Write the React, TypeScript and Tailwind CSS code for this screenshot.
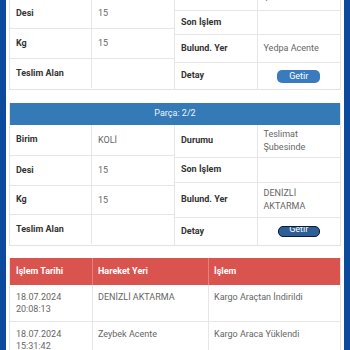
import React from "react";

type Row = { label: string; value?: string[]; h: string; button?: "normal" | "focused" };

const part1Left: Row[] = [
  { label: "Birim", value: ["KOLİ"], h: "h-[30px]" },
  { label: "Desi", value: ["15"], h: "h-[30px]" },
  { label: "Kg", value: ["15"], h: "h-[30px]" },
  { label: "Teslim Alan", h: "h-[29px]" },
];

const part1Right: Row[] = [
  { label: "Durumu", value: ["Teslimat", "Şubesinde"], h: "h-[42px]" },
  { label: "Son İşlem", h: "h-[24px]" },
  { label: "Bulund. Yer", value: ["Yedpa Acente"], h: "h-[28px]" },
  { label: "Detay", h: "h-[26px]", button: "normal" },
];

const part2Left: Row[] = [
  { label: "Birim", value: ["KOLİ"], h: "h-[31px]" },
  { label: "Desi", value: ["15"], h: "h-[30px]" },
  { label: "Kg", value: ["15"], h: "h-[29px]" },
  { label: "Teslim Alan", h: "h-[29px]" },
];

const part2Right: Row[] = [
  { label: "Durumu", value: ["Teslimat", "Şubesinde"], h: "h-[33px]" },
  { label: "Son İşlem", h: "h-[25px]" },
  { label: "Bulund. Yer", value: ["DENİZLİ", "AKTARMA"], h: "h-[35px]" },
  { label: "Detay", h: "h-[27px]", button: "focused" },
];

const movements = [
  { date: "18.07.2024", time: "20:08:13", place: "DENİZLİ AKTARMA", action: "Kargo Araçtan İndirildi" },
  { date: "18.07.2024", time: "15:31:42", place: "Zeybek Acente", action: "Kargo Araca Yüklendi" },
];

function GetirButton({ focused }: { focused?: boolean }) {
  if (focused) {
    return (
      <div className="w-[42px] h-[11px] rounded-[5px] bg-[#2d5e95] border-[1.5px] border-[#0e1a2e] overflow-hidden flex justify-center">
        <span className="text-white text-[9px] leading-[9px] -mt-[2px]">Getir</span>
      </div>
    );
  }
  return (
    <div className="w-[43px] h-[13px] rounded-[5px] bg-[#3a7bbf] flex items-center justify-center">
      <span className="text-white text-[9px] leading-none">Getir</span>
    </div>
  );
}

function InfoTable({ rows, last }: { rows: Row[]; last?: boolean }) {
  return (
    <div className={`w-1/2 flex flex-col ${last ? "" : "border-r border-[#e6e6e6]"}`}>
      {rows.map((r, i) => (
        <div
          key={r.label}
          className={`flex shrink-0 ${r.h} ${i < rows.length - 1 ? "border-b border-[#e6e6e6]" : ""}`}
        >
          <div className="w-1/2 border-r border-[#e6e6e6] px-[6px] flex items-center font-bold text-[#333]">
            {r.label}
          </div>
          <div className="w-1/2 px-[6px] flex flex-col justify-center text-[#666] leading-[13px]">
            {r.value?.map((v) => <span key={v}>{v}</span>)}
            {r.button && (
              <div className="flex justify-center">
                <GetirButton focused={r.button === "focused"} />
              </div>
            )}
          </div>
        </div>
      ))}
    </div>
  );
}

function PartCard({ title, left, right }: { title: string; left: Row[]; right: Row[] }) {
  return (
    <div className="border border-[#e3e3e3] border-t-0 bg-white">
      <div className="h-[22px] bg-[#337ab7] flex items-center justify-center text-[#eef4fb]">{title}</div>
      <div className="flex">
        <InfoTable rows={left} />
        <InfoTable rows={right} last />
      </div>
    </div>
  );
}

export default function App() {
  return (
    <div className="w-[350px] h-[350px] overflow-hidden flex bg-white font-['Roboto',sans-serif] text-[9px]">
      <div className="w-[6px] bg-[#0c4a9e]" />
      <div className="flex-1 px-[3px]">
        <div className="-mt-[53px]">
          <PartCard title="Parça: 1/2" left={part1Left} right={part1Right} />
        </div>
        <div className="mt-[13px]">
          <PartCard title="Parça: 2/2" left={part2Left} right={part2Right} />
        </div>

        {/* hareketler */}
        <div className="mt-[12px] border border-[#e3e3e3] border-t-0">
          <div className="flex h-[27px] bg-[#d9534f] text-white font-bold">
            <div className="w-[83px] px-[6px] pt-[7px] border-r border-[#e7807c]">İşlem Tarihi</div>
            <div className="w-[116px] px-[5px] pt-[7px] border-r border-[#e7807c]">Hareket Yeri</div>
            <div className="flex-1 px-[5px] pt-[7px]">İşlem</div>
          </div>
          {movements.map((m) => (
            <div key={m.time} className="flex h-[37px] border-b border-[#e6e6e6] text-[#666] leading-[12px]">
              <div className="w-[83px] px-[6px] pt-[6px] border-r border-[#e6e6e6] flex flex-col">
                <span>{m.date}</span>
                <span>{m.time}</span>
              </div>
              <div className="w-[116px] px-[5px] pt-[6px] border-r border-[#e6e6e6]">{m.place}</div>
              <div className="flex-1 px-[5px] pt-[6px]">{m.action}</div>
            </div>
          ))}
        </div>
      </div>
      <div className="w-[6px] bg-[#0c4a9e]" />
    </div>
  );
}
